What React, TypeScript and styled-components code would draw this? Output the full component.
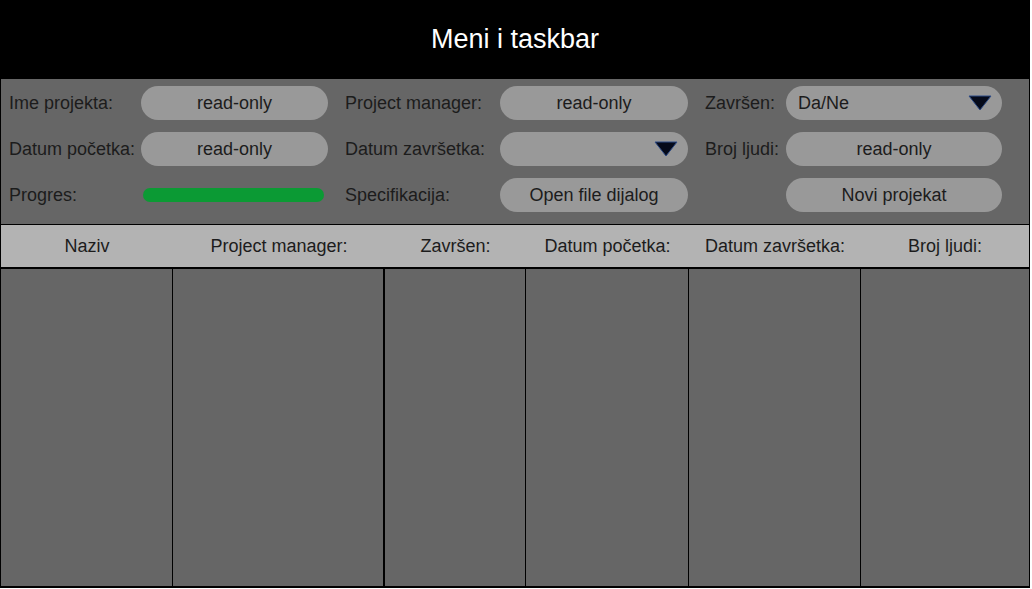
import React from "react";
import styled, { createGlobalStyle } from "styled-components";

const Global = createGlobalStyle`
  html, body { margin: 0; padding: 0; background: #ffffff; }
  body { font-family: "Liberation Sans", Arial, sans-serif; }
  * { box-sizing: border-box; }
`;

const Frame = styled.div`
  width: 1030px;
  height: 588px;
  border: 1px solid #000;
  border-top: none;
  border-bottom: 2px solid #000;
  display: flex;
  flex-direction: column;
  background: #666666;
`;

const TopBar = styled.header`
  height: 79px;
  margin: 0 -1px;
  background: #000;
  color: #fff;
  font-size: 27px;
  display: flex;
  align-items: center;
  justify-content: center;
  flex-shrink: 0;
`;

const FormPanel = styled.section`
  height: 146px;
  background: #666666;
  border-bottom: 1px solid #000;
  display: flex;
  padding: 7px 0 0 8px;
  gap: 17px;
  flex-shrink: 0;
`;

const Group = styled.div<{ $label: number; $field: number }>`
  display: grid;
  grid-template-columns: ${(p) => p.$label}px ${(p) => p.$field}px;
  grid-template-rows: repeat(3, 34px);
  row-gap: 12px;
  align-items: center;
`;

const Label = styled.span`
  font-size: 18px;
  color: #1c1c1c;
  white-space: nowrap;
`;

const Pill = styled.div`
  height: 34px;
  width: 100%;
  border-radius: 17px;
  background: #999999;
  color: #1c1c1c;
  font-size: 18px;
  display: flex;
  align-items: center;
  justify-content: center;
`;

const SelectPill = styled(Pill)`
  justify-content: space-between;
  padding: 0 10px 0 12px;
`;

const Arrow = () => (
  <svg width="24" height="16" viewBox="0 0 24 16">
    <polygon points="1,1 23,1 12,15" fill="#050a1a" stroke="#2c4a86" strokeWidth="1" strokeLinejoin="round" />
  </svg>
);

const ProgressBar = styled.div`
  height: 14px;
  width: 181px;
  margin-left: 2px;
  border-radius: 7px;
  background: #0b9a34;
`;

const Empty = styled.span``;

const TableHead = styled.div`
  height: 44px;
  background: #b3b3b3;
  border-bottom: 2px solid #000;
  display: grid;
  grid-template-columns: 172px 212px 141px 163px 172px 1fr;
  flex-shrink: 0;
`;

const HeadCell = styled.div`
  font-size: 18px;
  color: #1c1c1c;
  display: flex;
  align-items: center;
  justify-content: center;
`;

const TableBody = styled.div`
  flex: 1;
  display: grid;
  grid-template-columns: 172px 212px 141px 163px 172px 1fr;
`;

const BodyCol = styled.div<{ $border?: number }>`
  background: #666666;
  border-right: ${(p) => p.$border ?? 0}px solid #000;
`;

const columns: { title: string; border: number }[] = [
  { title: "Naziv", border: 1 },
  { title: "Project manager:", border: 2 },
  { title: "Završen:", border: 1 },
  { title: "Datum početka:", border: 1 },
  { title: "Datum završetka:", border: 1 },
  { title: "Broj ljudi:", border: 0 },
];

export default function App() {
  return (
    <>
      <Global />
      <Frame>
        <TopBar>Meni i taskbar</TopBar>
        <FormPanel>
          <Group $label={132} $field={187}>
            <Label>Ime projekta:</Label>
            <Pill>read-only</Pill>
            <Label>Datum početka:</Label>
            <Pill>read-only</Pill>
            <Label>Progres:</Label>
            <ProgressBar />
          </Group>
          <Group $label={155} $field={188}>
            <Label>Project manager:</Label>
            <Pill>read-only</Pill>
            <Label>Datum završetka:</Label>
            <SelectPill>
              <Empty />
              <Arrow />
            </SelectPill>
            <Label>Specifikacija:</Label>
            <Pill>Open file dijalog</Pill>
          </Group>
          <Group $label={81} $field={216}>
            <Label>Završen:</Label>
            <SelectPill>
              <span>Da/Ne</span>
              <Arrow />
            </SelectPill>
            <Label>Broj ljudi:</Label>
            <Pill>read-only</Pill>
            <Empty />
            <Pill>Novi projekat</Pill>
          </Group>
        </FormPanel>
        <TableHead>
          {columns.map((c) => (
            <HeadCell key={c.title}>{c.title}</HeadCell>
          ))}
        </TableHead>
        <TableBody>
          {columns.map((c) => (
            <BodyCol key={c.title} $border={c.border} />
          ))}
        </TableBody>
      </Frame>
    </>
  );
}
